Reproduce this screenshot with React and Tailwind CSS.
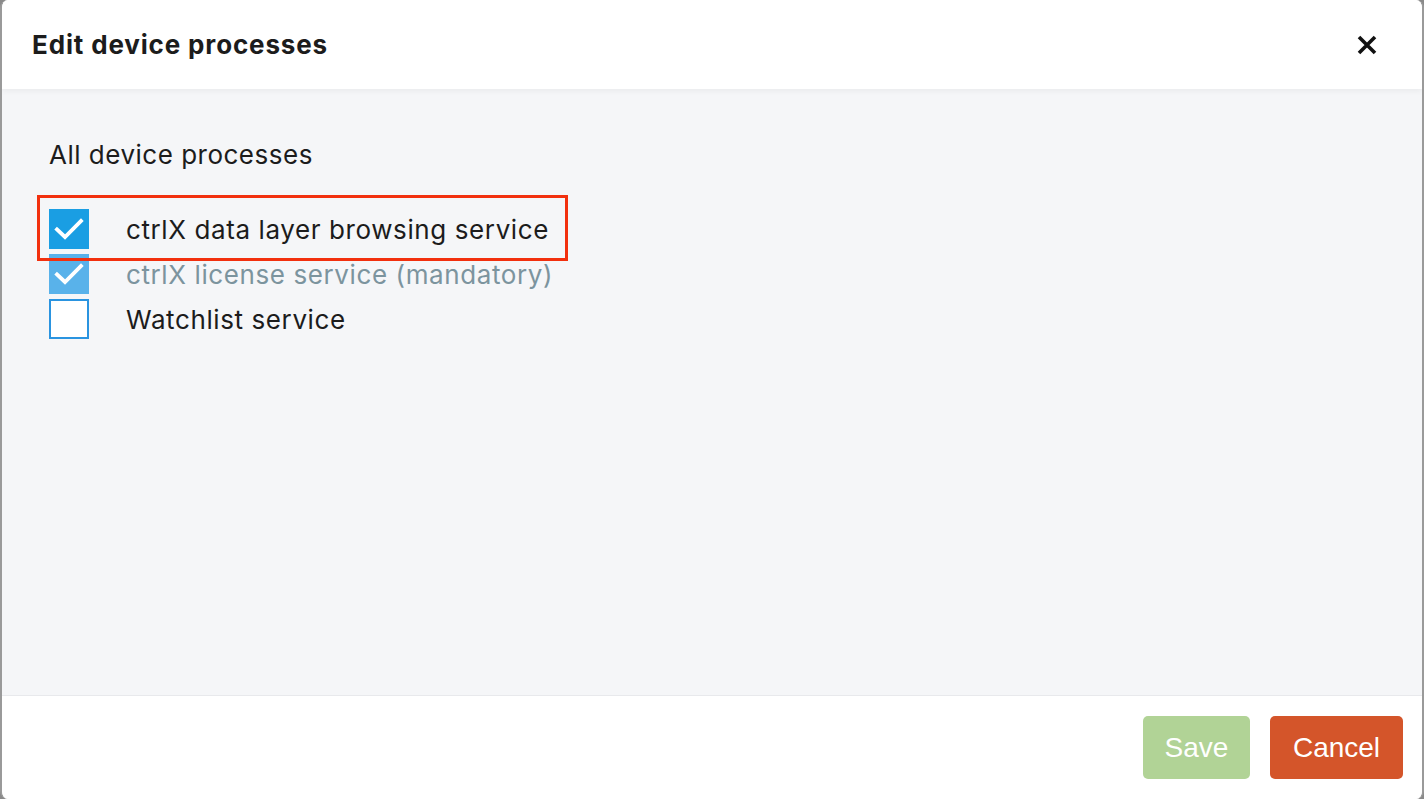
import React from "react";

function Check({ state }) {
  if (state === "off") {
    return <div className="w-10 h-10 shrink-0 border-2 border-[#2a94e0] bg-white" />;
  }
  const bg = state === "on" ? "bg-[#1a9ee3]" : "bg-[#59b2ea]";
  return (
    <div className={`w-10 h-10 shrink-0 flex items-center justify-center ${bg}`}>
      <svg width="34" height="34" viewBox="0 0 34 34" fill="none">
        <path d="M5 17.5 L13 25 L29 9" stroke="white" strokeWidth="3.8" strokeLinecap="square" />
      </svg>
    </div>
  );
}

export default function App() {
  const font = { fontFamily: "Inter, 'Noto Sans', sans-serif" };
  return (
    <div className="w-[1424px] h-[799px] bg-[#8a8a8a]" style={font}>
      <div className="w-full h-full flex flex-col bg-white rounded-[8px] border-x-2 border-[#9a9a9a] overflow-hidden">
        <div className="h-[89px] shrink-0 flex items-center justify-between pl-[30px] pr-[44px] bg-white shadow-[0_2px_6px_rgba(0,0,0,0.05)] z-10">
          <h1 className="text-[26px] font-bold text-[#1c1c1c] tracking-[0.85px]">Edit device processes</h1>
          <svg width="22" height="22" viewBox="0 0 22 22">
            <path d="M3 3 L19 19 M19 3 L3 19" stroke="#111" strokeWidth="3.6" />
          </svg>
        </div>
        <div className="flex-1 bg-[#f5f6f8] pt-[50px] px-[47px] relative">
          <div className="text-[26px] text-[#1c1c1c] leading-[32px] tracking-[0.5px]">All device processes</div>
          <div className="mt-[38px] flex flex-col gap-[5px]">
            <div className="flex items-center gap-[37px]">
              <Check state="on" />
              <span className="text-[26px] text-[#1c1c1c] tracking-[0.6px]">ctrlX data layer browsing service</span>
            </div>
            <div className="flex items-center gap-[37px]">
              <Check state="disabled" />
              <span className="text-[26px] text-[#7c949e] tracking-[0.6px]">ctrlX license service (mandatory)</span>
            </div>
            <div className="flex items-center gap-[37px]">
              <Check state="off" />
              <span className="text-[26px] text-[#1c1c1c] tracking-[0.6px]">Watchlist service</span>
            </div>
          </div>
          <div className="absolute left-[35px] top-[106px] w-[531px] h-[66px] border-[3px] border-[#f2300e] pointer-events-none" />
        </div>
        <div className="h-[104px] shrink-0 bg-white border-t border-[#e8e9ec] flex items-center justify-end gap-[20px] pr-[19px]" style={{ fontFamily: "'Liberation Sans', Arial, sans-serif" }}>
          <button className="w-[107px] h-[63px] rounded-[5px] bg-[#b1d396] text-white text-[28px]">Save</button>
          <button className="w-[133px] h-[63px] rounded-[5px] bg-[#d4552a] text-white text-[28px]">Cancel</button>
        </div>
      </div>
    </div>
  );
}
